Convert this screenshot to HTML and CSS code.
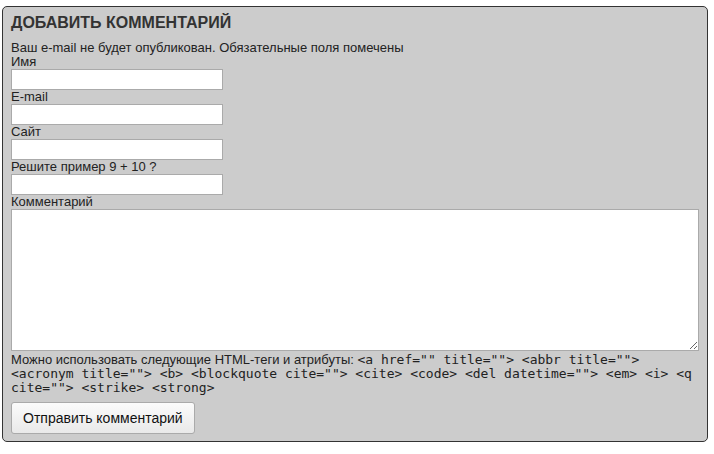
FILE: index.html
```html
<!DOCTYPE html>
<html lang="ru">
<head>
<meta charset="utf-8">
<title>Добавить комментарий</title>
<link rel="stylesheet" href="styles.css">
</head>
<body>
<div class="respond">
  <h3 class="title">ДОБАВИТЬ КОММЕНТАРИЙ</h3>
  <form class="form">
    <p class="notes">Ваш e-mail не будет опубликован. Обязательные поля помечены</p>
    <div class="field">
      <label class="label">Имя</label>
      <input class="input" type="text">
    </div>
    <div class="field">
      <label class="label">E-mail</label>
      <input class="input" type="text">
    </div>
    <div class="field">
      <label class="label">Сайт</label>
      <input class="input" type="text">
    </div>
    <div class="field">
      <label class="label">Решите пример 9 + 10 ?</label>
      <input class="input" type="text">
    </div>
    <div class="field">
      <label class="label">Комментарий</label>
      <textarea class="textarea"></textarea>
    </div>
    <p class="allowed">Можно использовать следующие HTML-теги и атрибуты: <code class="code">&lt;a href="" title=""&gt; &lt;abbr title=""&gt; &lt;acronym title=""&gt; &lt;b&gt; &lt;blockquote cite=""&gt; &lt;cite&gt; &lt;code&gt; &lt;del datetime=""&gt; &lt;em&gt; &lt;i&gt; &lt;q cite=""&gt; &lt;strike&gt; &lt;strong&gt;</code></p>
    <div class="actions">
      <button class="submit" type="button">Отправить комментарий</button>
    </div>
  </form>
</div>
</body>
</html>
```
FILE: styles.css
```css
html, body {
  margin: 0;
  padding: 0;
  background: #ffffff;
}
body {
  padding: 6px 6px 0 2px;
  font-family: "Liberation Sans", Arial, sans-serif;
  font-size: 13px;
  color: #222;
}
.respond {
  background: #cccccc;
  border: 1px solid #333;
  border-radius: 5px;
  padding: 6px 8px 8px 8px;
  height: 436px;
  box-sizing: border-box;
}
.title {
  margin: 0;
  font-size: 16px;
  font-weight: bold;
  line-height: 20px;
  color: #333;
}
.form {
  margin: 0;
}
.notes {
  margin: 8px 0 0 0;
  line-height: 14px;
}
.field {
  display: flex;
  flex-direction: column;
  align-items: flex-start;
}
.label {
  line-height: 14px;
}
.input {
  width: 212px;
  height: 21px;
  box-sizing: border-box;
  border: 1px solid #aaa;
  background: #fff;
  margin: 0;
  padding: 0 3px;
  font: inherit;
}
.textarea {
  width: 100%;
  height: 142px;
  box-sizing: border-box;
  border: 1px solid #aaa;
  background: #fff;
  margin: 0;
  font: inherit;
  display: block;
}
.allowed {
  margin: 2px 0 0 0;
  line-height: 14px;
}
.code {
  font-family: "DejaVu Sans Mono", monospace;
  font-size: 13px;
  line-height: 14px;
}
.actions {
  margin-top: 7px;
}
.submit {
  height: 32px;
  padding: 0 11px;
  border: 1px solid #aaa;
  border-radius: 3px;
  background: linear-gradient(#fbfbfb, #e9e9e9);
  font-family: "Liberation Sans", Arial, sans-serif;
  font-size: 14px;
  color: #111;
}
```
